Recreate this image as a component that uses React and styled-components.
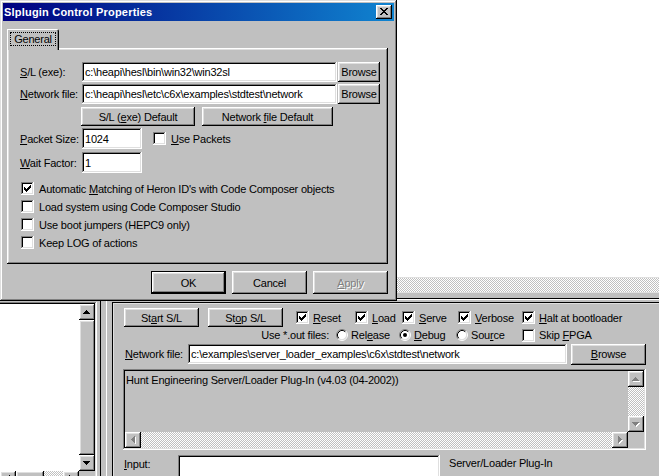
import React from "react";
import styled, { createGlobalStyle, css } from "styled-components";

const GlobalStyle = createGlobalStyle`
  html, body {
    margin: 0;
    padding: 0;
    background: #c0c0c0;
  }
  body {
    font-family: "Liberation Sans", Arial, sans-serif;
    font-size: 11px;
    letter-spacing: -0.2px;
    color: #000;
  }
`;

// classic 3d edges
const raised = css`
  background: #c0c0c0;
  box-shadow: inset -1px -1px #000, inset 1px 1px #fff, inset -2px -2px #808080,
    inset 2px 2px #dfdfdf;
`;

const sunken = css`
  box-shadow: inset -1px -1px #fff, inset 1px 1px #808080, inset -2px -2px #dfdfdf,
    inset 2px 2px #000;
`;

const dither = css`
  background: repeating-conic-gradient(#fff 0 25%, #c0c0c0 0 50%) 0 0 / 2px 2px;
`;

const Desktop = styled.div`
  position: relative;
  width: 659px;
  height: 476px;
  overflow: hidden;
  background: #c0c0c0;
`;

/* ---------- host application ---------- */

const AppWindow = styled.div`
  display: flex;
  flex-direction: column;
  height: 100%;
`;

const DocArea = styled.div`
  flex: none;
  height: 277px;
  background: #fff;
`;

const DocScroll = styled.div`
  flex: none;
  height: 16px;
  box-sizing: border-box;
  border-top: 1px solid #dfdfdf;
  border-bottom: 1px solid #dfdfdf;
  ${dither};
`;

const PaneGap = styled.div`
  flex: none;
  height: 5px;
`;

const LowerPane = styled.div`
  flex: 1;
  min-height: 0;
  display: flex;
  align-items: flex-start;
  border-top: 1px solid #000;
  box-shadow: inset 0 1px #fff;
  padding-top: 3px;
`;

const ListFrame = styled.div`
  flex: none;
  width: 99px;
  margin-left: -2px;
  padding: 2px;
  box-sizing: border-box;
  background: #fff;
  ${sunken};
  display: flex;
  flex-direction: column;
`;

const ListBody = styled.div`
  display: flex;
  height: 167px;
`;

const ListWhite = styled.div`
  flex: 1;
  background: #fff;
`;

const VScroll = styled.div`
  flex: none;
  width: 16px;
  display: flex;
  flex-direction: column;
  background: #c0c0c0;
  ${(p) => p.$dithered && dither};
`;

const HScroll = styled.div`
  flex: none;
  height: 16px;
  display: flex;
  background: #c0c0c0;
  ${(p) => p.$dithered && dither};
`;

const Track = styled.div`
  flex: 1;
  ${dither};
`;

const Thumb = styled.div`
  flex: ${(p) => (p.$w ? "none" : "1")};
  width: ${(p) => (p.$w ? `${p.$w}px` : "auto")};
  ${raised};
`;

const Corner = styled.div`
  flex: none;
  width: 16px;
  height: 16px;
  background: #c0c0c0;
`;

const ArrowBtn = styled.div`
  flex: none;
  width: 16px;
  height: 16px;
  ${raised};
  display: flex;
`;

const Splitter = styled.div`
  flex: none;
  align-self: stretch;
  width: 15px;
  margin-top: -3px;
  background: linear-gradient(
    90deg,
    #c0c0c0 0 3px,
    #000 3px 4px,
    #c0c0c0 4px 9px,
    #fff 9px 10px,
    #c0c0c0 10px
  );
`;

const ControlFrame = styled.div`
  flex: 1;
  align-self: stretch;
  display: flex;
  flex-direction: column;
  padding: 6px 0 0 11px;
  box-shadow: inset 1px 1px #000, inset 2px 2px #dfdfdf;
`;

const ButtonRow = styled.div`
  display: flex;
  align-items: center;
  height: 19px;
  padding-left: 1px;
`;

const OptionRow = styled.div`
  display: flex;
  align-items: center;
  height: 16px;
`;

const OutLabel = styled.span`
  flex: none;
  width: 213px;
  box-sizing: border-box;
  padding-right: 7px;
  text-align: right;
  white-space: nowrap;
`;

const FieldRow = styled.div`
  display: flex;
  align-items: ${(p) => (p.$top === 5 ? "flex-start" : "center")};
  height: 20px;
  margin-top: ${(p) => p.$top || 0}px;
  padding-left: ${(p) => p.$indent || 0}px;
`;

const RowLabel = styled.span`
  flex: none;
  width: ${(p) => p.$w}px;
  white-space: nowrap;
  ${(p) => p.$pad && `padding-top: ${p.$pad}px;`}
`;

const LogBox = styled.div`
  margin-top: 5px;
  width: 523px;
  height: 81px;
  box-sizing: border-box;
  padding: 2px;
  background: #c0c0c0;
  ${sunken};
  display: grid;
  grid-template-columns: 1fr 16px;
  grid-template-rows: 1fr 16px;
`;

const LogText = styled.div`
  padding: 3px 1px;
  white-space: nowrap;
  overflow: hidden;
`;

const StatusText = styled.span`
  margin-left: 9px;
  padding-top: 2px;
  white-space: nowrap;
`;

/* ---------- shared controls ---------- */

const ButtonFace = styled.div`
  flex: none;
  width: ${(p) => (p.$w ? `${p.$w}px` : "auto")};
  height: ${(p) => p.$h || 19}px;
  margin-left: ${(p) => p.$ml || 0}px;
  box-sizing: border-box;
  ${raised};
  display: flex;
  align-items: center;
  justify-content: center;
  white-space: nowrap;
  ${(p) =>
    p.$default &&
    css`
      box-shadow: inset 0 0 0 1px #000, inset -2px -2px #000, inset 2px 2px #fff,
        inset -3px -3px #808080, inset 3px 3px #dfdfdf;
    `}
  ${(p) =>
    p.$disabled &&
    css`
      color: #808080;
      text-shadow: 1px 1px #fff;
    `}
`;

const Button = ({ children, ...rest }) => (
  <ButtonFace {...rest}>
    <span>{children}</span>
  </ButtonFace>
);

const Field = styled.div`
  flex: ${(p) => (p.$w ? "none" : "1")};
  width: ${(p) => (p.$w ? `${p.$w}px` : "auto")};
  height: ${(p) => p.$h || 20}px;
  box-sizing: border-box;
  padding: 0 3px;
  background: #fff;
  ${sunken};
  display: flex;
  align-items: center;
  white-space: nowrap;
  overflow: hidden;
`;

const CheckItem = styled.label`
  flex: none;
  width: ${(p) => (p.$w ? `${p.$w}px` : "auto")};
  margin-left: ${(p) => p.$ml || 0}px;
  display: flex;
  align-items: center;
  gap: ${(p) => p.$gap || 5}px;
  white-space: nowrap;
`;

const Box = styled.span`
  flex: none;
  width: 13px;
  height: 13px;
  background: #fff;
  ${sunken};
  display: flex;
`;

const Key = styled.u`
  text-decoration: underline;
  text-underline-offset: 1px;
`;

/* ---------- dialog window ---------- */

const Dialog = styled.div`
  position: absolute;
  left: 0;
  top: 0;
  width: 397px;
  height: 301px;
  box-sizing: border-box;
  padding: 3px;
  background: #c0c0c0;
  box-shadow: inset -1px -1px #000, inset 1px 1px #dfdfdf, inset -2px -2px #808080,
    inset 2px 2px #fff;
  display: flex;
  flex-direction: column;
`;

const TitleBar = styled.div`
  flex: none;
  height: 18px;
  padding: 0 2px 0 1px;
  display: flex;
  align-items: center;
  justify-content: space-between;
  background: linear-gradient(90deg, #000080, #1084d0);
`;

const TitleText = styled.span`
  color: #fff;
  font-weight: bold;
  font-size: 11px;
  letter-spacing: 0.2px;
  white-space: nowrap;
`;

const CloseButton = styled.div`
  width: 16px;
  height: 14px;
  ${raised};
  display: flex;
`;

const DialogBody = styled.div`
  flex: 1;
  display: flex;
  flex-direction: column;
  padding: 8px 6px 0 4px;
`;

const TabStrip = styled.div`
  display: flex;
  height: 19px;
`;

const Tab = styled.div`
  position: relative;
  z-index: 1;
  width: 52px;
  height: 21px;
  box-sizing: border-box;
  padding: 3px 3px 0 3px;
  background: #c0c0c0;
  border-top-right-radius: 2px;
  box-shadow: inset 1px 1px #fff, inset -1px 0 #000, inset -2px 0 #808080;
`;

const FocusText = styled.div`
  height: 14px;
  outline: 1px dotted #000;
  outline-offset: -1px;
  display: flex;
  align-items: center;
  justify-content: center;
`;

const TabPanel = styled.div`
  height: 216px;
  box-sizing: border-box;
  padding: 14px 8px 0 13px;
  ${raised};
  display: flex;
  flex-direction: column;
`;

const PathRow = styled.div`
  display: grid;
  grid-template-columns: 61px 1fr 42px;
  column-gap: 1px;
  align-items: center;
  height: 20px;
  margin-top: ${(p) => p.$top || 0}px;
`;

const DefaultsRow = styled.div`
  display: flex;
  gap: 7px;
  margin: 3px 0 0 61px;
`;

const NumberRow = styled.div`
  display: flex;
  align-items: center;
  height: 21px;
  margin-top: ${(p) => p.$top}px;
`;

const OptionList = styled.div`
  display: flex;
  flex-direction: column;
  gap: 5px;
  margin: 9px 0 0 1px;
`;

const CheckLine = styled.div`
  height: 13px;
  display: flex;
  align-items: center;
`;

const DialogButtons = styled.div`
  display: flex;
  justify-content: flex-end;
  gap: 6px;
  margin-top: 7px;
`;

/* ---------- glyphs ---------- */

const pixels = (rows, ox, oy) =>
  rows
    .map((row, y) =>
      row
        .split("")
        .map((c, x) => (c === "#" ? `M${ox + x} ${oy + y}h1v1h-1z` : ""))
        .join("")
    )
    .join("");

const CHECK = pixels(
  ["......#", ".....##", "#...###", "##.###.", "#####..", ".###...", "..#...."],
  3,
  3
);

const CROSS = pixels(
  ["##....##", ".##..##.", "..####..", "...##...", "..####..", ".##..##.", "##....##"],
  4,
  3
);

const ARROWS = {
  up: ["...#...", "..###..", ".#####.", "#######"],
  down: ["#######", ".#####.", "..###..", "...#..."],
  left: ["...#", "..##", ".###", "####", ".###", "..##", "...#"],
  right: ["#...", "##..", "###.", "####", "###.", "##..", "#..."],
};

function Arrow({ dir, disabled }) {
  const rows = ARROWS[dir];
  const ox = dir === "up" || dir === "down" ? 4 : 6;
  const oy = dir === "up" || dir === "down" ? 6 : 4;
  return (
    <ArrowBtn>
      <svg width="16" height="16" viewBox="0 0 16 16" shapeRendering="crispEdges">
        {disabled && <path d={pixels(rows, ox + 1, oy + 1)} fill="#fff" />}
        <path d={pixels(rows, ox, oy)} fill={disabled ? "#808080" : "#000"} />
      </svg>
    </ArrowBtn>
  );
}

function Check({ label, checked, w, ml, gap }) {
  return (
    <CheckItem $w={w} $ml={ml} $gap={gap}>
      <Box>
        {checked && (
          <svg width="13" height="13" viewBox="0 0 13 13" shapeRendering="crispEdges">
            <path d={CHECK} fill="#000" />
          </svg>
        )}
      </Box>
      <span>{label}</span>
    </CheckItem>
  );
}

function Radio({ label, checked, w }) {
  return (
    <CheckItem $w={w} $gap={3}>
      <svg width="12" height="12" viewBox="0 0 12 12">
        <circle cx="6" cy="6" r="4.5" fill="#fff" />
        <path d="M2.11 9.89A5.5 5.5 0 0 1 9.89 2.11" stroke="#808080" fill="none" />
        <path d="M9.89 2.11A5.5 5.5 0 0 1 2.11 9.89" stroke="#fff" fill="none" />
        <path d="M2.82 9.18A4.5 4.5 0 0 1 9.18 2.82" stroke="#000" fill="none" />
        <path d="M9.18 2.82A4.5 4.5 0 0 1 2.82 9.18" stroke="#dfdfdf" fill="none" />
        {checked && <circle cx="6" cy="6" r="2" fill="#000" />}
      </svg>
      <span>{label}</span>
    </CheckItem>
  );
}

const SL_PATH = "c:\\heapi\\hesl\\bin\\win32\\win32sl";
const NET_PATH = "c:\\heapi\\hesl\\etc\\c6x\\examples\\stdtest\\network";
const LOADER_NET = "c:\\examples\\server_loader_examples\\c6x\\stdtest\\network";

function PropertiesDialog() {
  return (
    <Dialog>
      <TitleBar>
        <TitleText>Slplugin Control Properties</TitleText>
        <CloseButton>
          <svg width="16" height="14" viewBox="0 0 16 14" shapeRendering="crispEdges">
            <path d={CROSS} fill="#000" />
          </svg>
        </CloseButton>
      </TitleBar>
      <DialogBody>
        <TabStrip>
          <Tab>
            <FocusText>General</FocusText>
          </Tab>
        </TabStrip>
        <TabPanel>
          <PathRow>
            <RowLabel>
              <Key>S</Key>/L (exe):
            </RowLabel>
            <Field>{SL_PATH}</Field>
            <Button $h={20}>Browse</Button>
          </PathRow>
          <PathRow $top={2}>
            <RowLabel>
              <Key>N</Key>etwork file:
            </RowLabel>
            <Field>{NET_PATH}</Field>
            <Button $h={20}>Browse</Button>
          </PathRow>
          <DefaultsRow>
            <Button $w={114}>
              S/L (<Key>e</Key>xe) Default
            </Button>
            <Button $w={131}>
              Network <Key>f</Key>ile Default
            </Button>
          </DefaultsRow>
          <NumberRow $top={2}>
            <RowLabel $w={62}>
              <Key>P</Key>acket Size:
            </RowLabel>
            <Field $w={60} $h={21}>1024</Field>
            <Check
              ml={11}
              label={
                <>
                  <Key>U</Key>se Packets
                </>
              }
            />
          </NumberRow>
          <NumberRow $top={3}>
            <RowLabel $w={62}>
              <Key>W</Key>ait Factor:
            </RowLabel>
            <Field $w={60} $h={21}>1</Field>
          </NumberRow>
          <OptionList>
            <CheckLine>
              <Check
                checked
                label={
                  <>
                    Automatic <Key>M</Key>atching of Heron ID's with Code Composer objects
                  </>
                }
              />
            </CheckLine>
            <CheckLine>
              <Check label="Load system using Code Composer Studio" />
            </CheckLine>
            <CheckLine>
              <Check label="Use boot jumpers (HEPC9 only)" />
            </CheckLine>
            <CheckLine>
              <Check label="Keep LOG of actions" />
            </CheckLine>
          </OptionList>
        </TabPanel>
        <DialogButtons>
          <Button $w={75} $h={23} $default>
            OK
          </Button>
          <Button $w={75} $h={23}>
            Cancel
          </Button>
          <Button $w={75} $h={23} $disabled>
            <Key>A</Key>pply
          </Button>
        </DialogButtons>
      </DialogBody>
    </Dialog>
  );
}

function LoaderPanel() {
  return (
    <ControlFrame>
      <ButtonRow>
        <Button $w={75}>
          St<Key>a</Key>rt S/L
        </Button>
        <Button $w={75} $ml={9}>
          St<Key>o</Key>p S/L
        </Button>
        <Check ml={13} w={59} gap={4} checked label={<><Key>R</Key>eset</>} />
        <Check w={47} gap={4} checked label={<><Key>L</Key>oad</>} />
        <Check w={56} gap={4} checked label={<><Key>S</Key>erve</>} />
        <Check w={64} gap={4} checked label={<><Key>V</Key>erbose</>} />
        <Check gap={4} checked label={<><Key>H</Key>alt at bootloader</>} />
      </ButtonRow>
      <OptionRow>
        <OutLabel>Use *.out files:</OutLabel>
        <Radio w={63} label={<>Rel<Key>e</Key>ase</>} />
        <Radio w={57} checked label={<><Key>D</Key>ebug</>} />
        <Radio w={66} label={<>Sou<Key>r</Key>ce</>} />
        <Check gap={4} label={<>Skip <Key>F</Key>PGA</>} />
      </OptionRow>
      <FieldRow $top={1} $indent={2}>
        <RowLabel $w={63}>
          <Key>N</Key>etwork file:
        </RowLabel>
        <Field $w={379}>{LOADER_NET}</Field>
        <Button $w={75} $h={21} $ml={4}>
          <Key>B</Key>rowse
        </Button>
      </FieldRow>
      <LogBox>
        <LogText>Hunt Engineering Server/Loader Plug-In (v4.03 (04-2002))</LogText>
        <VScroll $dithered>
          <Arrow dir="up" disabled />
          <Track />
          <Arrow dir="down" disabled />
        </VScroll>
        <HScroll $dithered>
          <Arrow dir="left" disabled />
          <Track />
          <Arrow dir="right" disabled />
        </HScroll>
        <Corner />
      </LogBox>
      <FieldRow $top={5} $indent={1}>
        <RowLabel $w={54} $pad={3}>
          <Key>I</Key>nput:
        </RowLabel>
        <Field $w={262} $h={24} />
        <StatusText>Server/Loader Plug-In</StatusText>
      </FieldRow>
    </ControlFrame>
  );
}

export default function App() {
  return (
    <>
      <GlobalStyle />
      <Desktop>
        <AppWindow>
          <DocArea />
          <DocScroll />
          <PaneGap />
          <LowerPane>
            <ListFrame>
              <ListBody>
                <ListWhite />
                <VScroll>
                  <Arrow dir="up" />
                  <Thumb />
                  <Arrow dir="down" />
                </VScroll>
              </ListBody>
              <HScroll>
                <Arrow dir="left" />
                <Thumb $w={28} />
                <Track />
                <Arrow dir="right" />
                <Corner />
              </HScroll>
            </ListFrame>
            <Splitter />
            <LoaderPanel />
          </LowerPane>
        </AppWindow>
        <PropertiesDialog />
      </Desktop>
    </>
  );
}
